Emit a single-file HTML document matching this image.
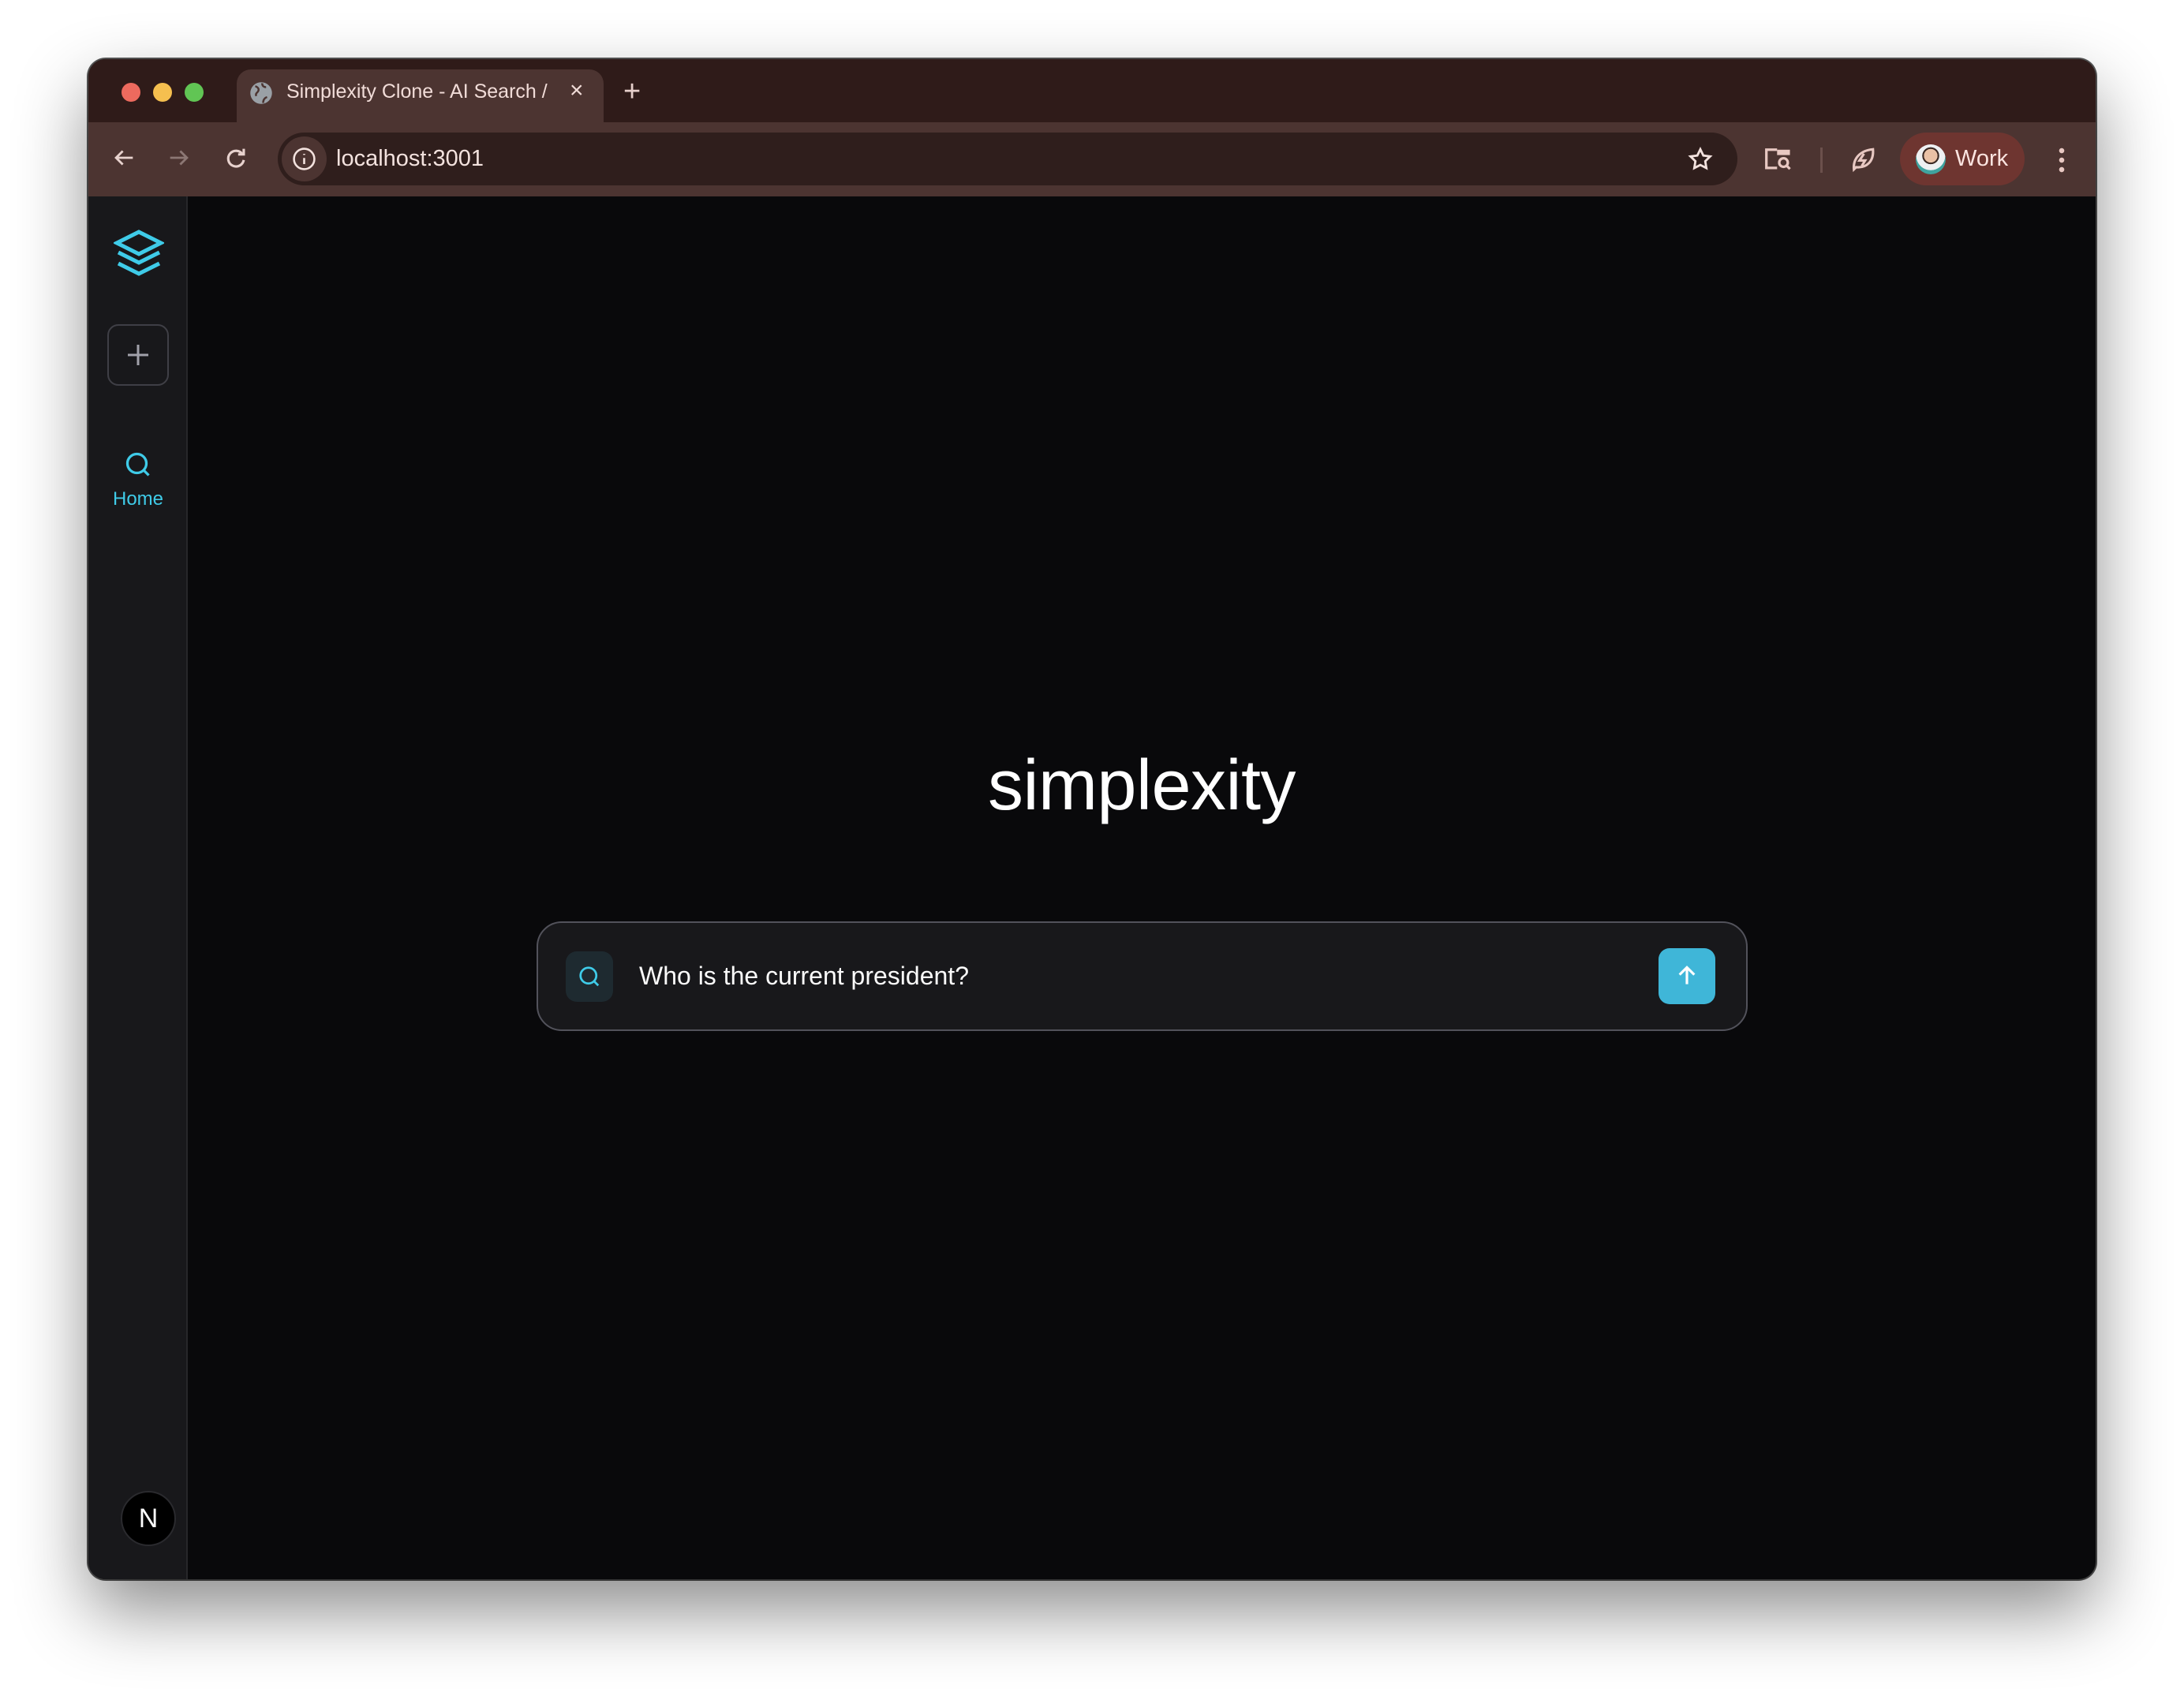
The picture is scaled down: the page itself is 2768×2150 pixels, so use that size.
<!DOCTYPE html>
<html><head><meta charset="utf-8"><style>
*{margin:0;padding:0;box-sizing:border-box}
body{width:2768px;height:2150px;background:#fff;position:relative;overflow:hidden;font-family:"Liberation Sans",sans-serif}
.win{position:absolute;left:112px;top:75px;width:2544px;height:1927px;border-radius:22px;overflow:hidden;background:#09090b;box-shadow:0 40px 90px rgba(0,0,0,.45),0 0 0 2px #555}
.strip{position:absolute;left:0;top:0;width:100%;height:80px;background:#2f1b19}
.tb{position:absolute;left:0;top:80px;width:100%;height:94px;background:#4c3431}
.dot{position:absolute;top:30px;width:24px;height:24px;border-radius:50%}
.tab{position:absolute;left:188px;top:13px;width:465px;height:70px;background:#4c3431;border-radius:18px 18px 0 0;color:#f1dcd8;font-size:25px}
.url{position:absolute;left:240px;top:93px;width:1850px;height:67px;border-radius:34px;background:#2f1e1c;color:#f3e2de;font-size:29px}
.side{position:absolute;left:0;top:174px;width:126px;bottom:0;background:#18181b;border-right:2px solid #27272a}
.abs{position:absolute}
</style></head><body>
<div class="win">
<div class="strip"></div>
<div class="dot" style="left:42px;background:#ed6a5e"></div>
<div class="dot" style="left:82px;background:#f5bf4f"></div>
<div class="dot" style="left:122px;background:#61c554"></div>
<div class="tab">
 <svg class="abs" style="left:16px;top:15px" width="30" height="30" viewBox="0 0 24 24"><circle cx="12" cy="12" r="11" fill="#9aa0a6"/><path d="M6 5c3 1 4 3 3 5s-3 2-2 5M13 2c0 3 2 4 4 4M14 22c0-3 1-5 4-6" stroke="#4c3431" stroke-width="2" fill="none"/></svg>
 <div class="abs" style="left:63px;top:14px;white-space:nowrap;width:335px;overflow:hidden">Simplexity Clone - AI Search /</div>
 <div class="abs" style="left:422px;top:10px;font-size:30px">×</div>
</div>
<div class="abs" style="left:678px;top:20px;color:#e6cfcb;font-size:38px;font-weight:300">+</div>
<div class="tb"></div>
<svg class="abs" style="left:28px;top:108px" width="34" height="34" viewBox="0 0 24 24" fill="none" stroke="#e8d2ce" stroke-width="2"><path d="M20 12H5M11 6l-6 6 6 6"/></svg>
<svg class="abs" style="left:98px;top:108px" width="34" height="34" viewBox="0 0 24 24" fill="none" stroke="#8c7774" stroke-width="2"><path d="M4 12h15M13 6l6 6-6 6"/></svg>
<svg class="abs" style="left:170px;top:108px" width="34" height="34" viewBox="0 0 24 24" fill="none" stroke="#e8d2ce" stroke-width="2.2"><path d="M18 9a7 7 0 1 0 1 5"/><path d="M19 4v5h-5"/></svg>
<div class="url">
 <div class="abs" style="left:5px;top:5px;width:57px;height:57px;border-radius:50%;background:#4c3431"></div>
 <svg class="abs" style="left:18px;top:18px" width="31" height="31" viewBox="0 0 24 24" fill="none" stroke="#f3e2de" stroke-width="2"><circle cx="12" cy="12" r="10"/><path d="M12 11v6M12 7v1"/></svg>
 <div class="abs" style="left:74px;top:17px">localhost:3001</div>
 <svg class="abs" style="left:1786px;top:17px" width="34" height="34" viewBox="0 0 24 24" fill="none" stroke="#f3e2de" stroke-width="2"><path d="M12 3l2.7 5.6 6.1.8-4.4 4.3 1 6.1L12 17l-5.4 2.8 1-6.1L3.2 9.4l6.1-.8z"/></svg>
</div>
<svg class="abs" style="left:2124px;top:110px" width="38" height="34" viewBox="0 0 28 24" fill="none" stroke="#e8c8c2" stroke-width="2.4"><path d="M12 20H2V3h10"/><rect x="12" y="3" width="12" height="5" fill="#e8c8c2" stroke="none"/><circle cx="18" cy="15" r="4"/><path d="M21 18l3 3"/></svg>
<div class="abs" style="left:2195px;top:112px;width:3px;height:32px;background:#6b504c"></div>
<svg class="abs" style="left:2232px;top:110px" width="34" height="34" viewBox="0 0 24 24" fill="none" stroke="#e8c8c2" stroke-width="2.2"><path d="M4 21c-1-10 6-17 17-18 1 11-6 17-15 16z"/><path d="M13 7l-4 6h5l-3 5"/></svg>
<div class="abs" style="left:2296px;top:93px;width:158px;height:67px;border-radius:34px;background:#6e3530"></div>
<div class="abs" style="left:2316px;top:108px;width:38px;height:38px;border-radius:50%;background:radial-gradient(circle at 50% 38%,#e9c1a6 0 28%,#3b2a25 29% 35%,#eef0f2 36% 60%,#3fa39f 61%)"></div>
<div class="abs" style="left:2366px;top:110px;color:#fbe4e0;font-size:29px">Work</div>
<div class="abs" style="left:2497px;top:110px;width:8px;height:34px;background:radial-gradient(circle,#e8c8c2 3px,transparent 3.5px) 0 0/8px 12px"></div>

<div class="side">
 <svg class="abs" style="left:32px;top:42px" width="64" height="62" viewBox="0 0 64 62" fill="none" stroke="#3fcbe8" stroke-width="5"><path d="M32 3L4 17l28 14 28-14z"/><path d="M6 29l26 13 26-13"/><path d="M6 43l26 13 26-13"/></svg>
 <div class="abs" style="left:24px;top:162px;width:78px;height:78px;border:2px solid #3f3f46;border-radius:14px"></div>
 <svg class="abs" style="left:49px;top:187px" width="28" height="28" viewBox="0 0 28 28" stroke="#a1a1aa" stroke-width="3"><path d="M14 1v26M1 14h26"/></svg>
 <svg class="abs" style="left:45px;top:322px" width="36" height="36" viewBox="0 0 24 24" fill="none" stroke="#3fcbe8" stroke-width="2.2"><circle cx="11" cy="11" r="8"/><path d="M17 17l4 4"/></svg>
 <div class="abs" style="left:0;width:126px;top:370px;text-align:center;color:#3fcbe8;font-size:24px">Home</div>
 <div class="abs" style="left:41px;top:1641px;width:70px;height:70px;border-radius:50%;background:#000;border:2px solid #2a2a2e;color:#fff;font-size:34px;text-align:center;line-height:66px">N</div>
</div>

<div class="abs" style="left:126px;right:0;top:870px;text-align:center;color:#fff;font-size:90px;letter-spacing:-0.5px">simplexity</div>
<div class="abs" style="left:568px;top:1093px;width:1535px;height:139px;border:2px solid #52525b;border-radius:32px;background:#18181b">
 <div class="abs" style="left:35px;top:36px;width:60px;height:64px;border-radius:14px;background:#1e2a30"></div>
 <svg class="abs" style="left:50px;top:53px" width="30" height="30" viewBox="0 0 24 24" fill="none" stroke="#3fcbe8" stroke-width="2.2"><circle cx="11" cy="11" r="8"/><path d="M17 17l4 4"/></svg>
 <div class="abs" style="left:128px;top:49px;color:#fafafa;font-size:32px">Who is the current president?</div>
 <div class="abs" style="left:1420px;top:32px;width:72px;height:71px;border-radius:14px;background:#3fb6d8"></div>
 <svg class="abs" style="left:1440px;top:51px" width="32" height="32" viewBox="0 0 24 24" fill="none" stroke="#fff" stroke-width="2.4"><path d="M12 20V5M5 11l7-7 7 7"/></svg>
</div>
</div>
</body></html>
